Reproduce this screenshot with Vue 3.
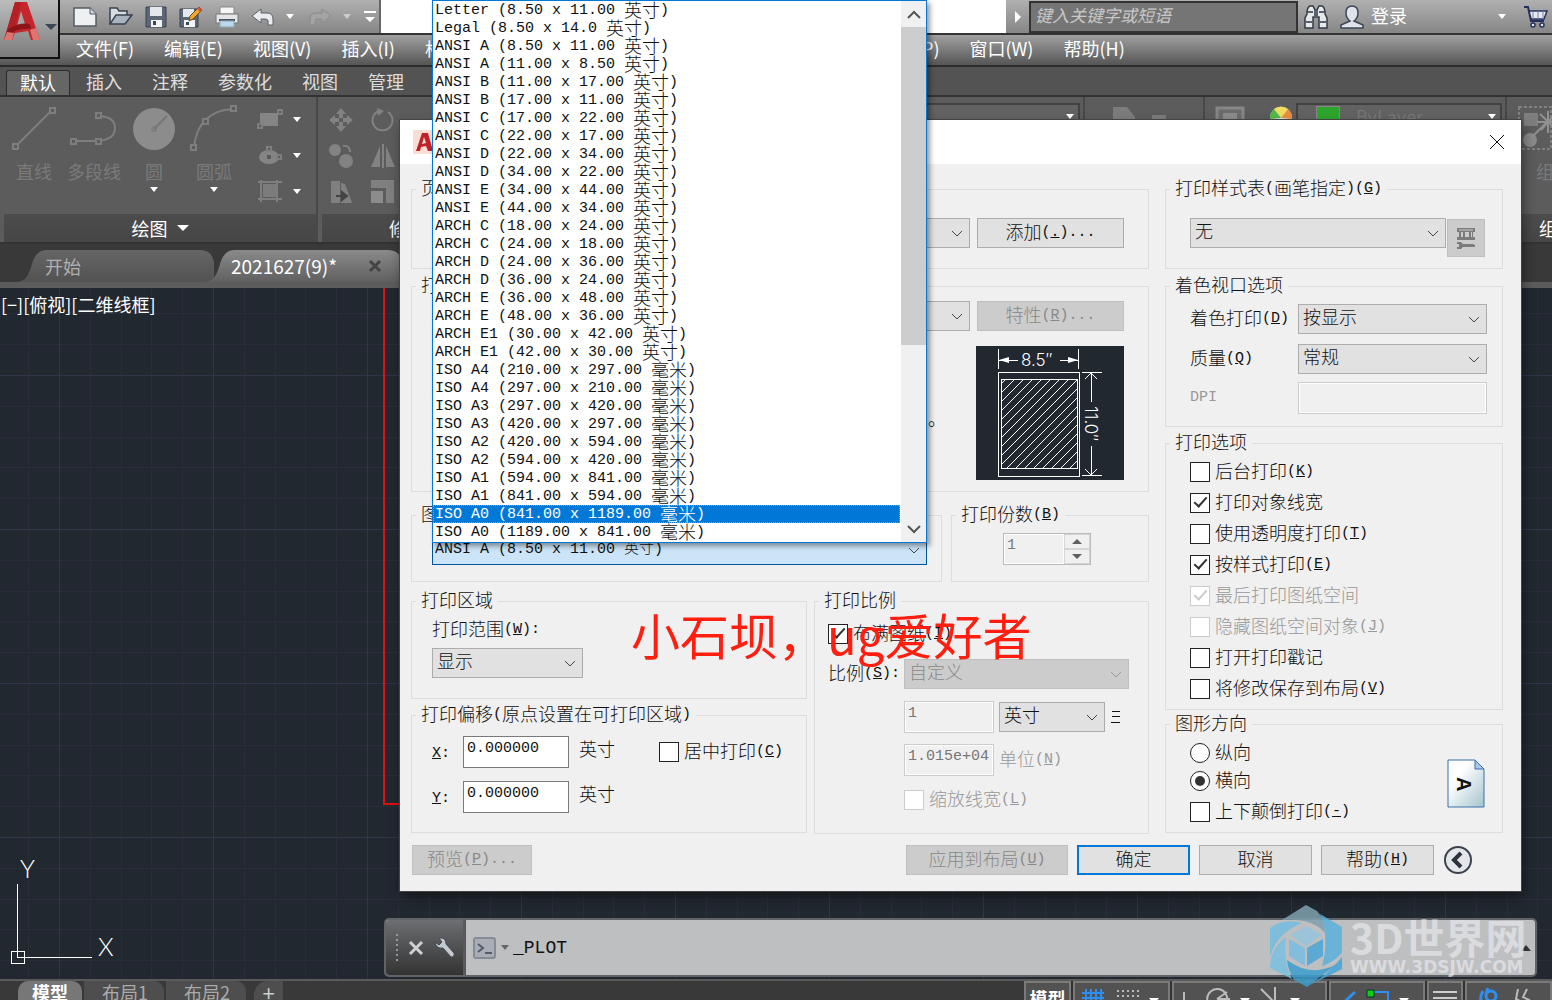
<script setup>
import { h } from 'vue'

// Label text: Latin runs and Han runs get their own size, "&" marks the access key.
const T = (props) => {
  const parts = props.s.match(/&.|[\u2e80-\uffef]+|[^&\u2e80-\uffef]+/g) || []
  return h('span', { class: 't' }, parts.map((p) => {
    if (p[0] === '&') return h('u', { class: 'lat' }, p.slice(1))
    return h('span', { class: /[\u2e80-\uffef]/.test(p) ? 'han' : 'lat' }, p)
  }))
}
T.props = ['s']

const menus = ['文件(F)', '编辑(E)', '视图(V)', '插入(I)', '格式(O)', '工具(T)', '绘图(D)', '标注(N)', '修改(M)', '参数(P)', '窗口(W)', '帮助(H)']
const tabs = ['默认', '插入', '注释', '参数化', '视图', '管理']

const papers = [
  'Letter (8.50 x 11.00 英寸)', 'Legal (8.50 x 14.0 英寸)',
  'ANSI A (8.50 x 11.00 英寸)', 'ANSI A (11.00 x 8.50 英寸)',
  'ANSI B (11.00 x 17.00 英寸)', 'ANSI B (17.00 x 11.00 英寸)',
  'ANSI C (17.00 x 22.00 英寸)', 'ANSI C (22.00 x 17.00 英寸)',
  'ANSI D (22.00 x 34.00 英寸)', 'ANSI D (34.00 x 22.00 英寸)',
  'ANSI E (34.00 x 44.00 英寸)', 'ANSI E (44.00 x 34.00 英寸)',
  'ARCH C (18.00 x 24.00 英寸)', 'ARCH C (24.00 x 18.00 英寸)',
  'ARCH D (24.00 x 36.00 英寸)', 'ARCH D (36.00 x 24.00 英寸)',
  'ARCH E (36.00 x 48.00 英寸)', 'ARCH E (48.00 x 36.00 英寸)',
  'ARCH E1 (30.00 x 42.00 英寸)', 'ARCH E1 (42.00 x 30.00 英寸)',
  'ISO A4 (210.00 x 297.00 毫米)', 'ISO A4 (297.00 x 210.00 毫米)',
  'ISO A3 (297.00 x 420.00 毫米)', 'ISO A3 (420.00 x 297.00 毫米)',
  'ISO A2 (420.00 x 594.00 毫米)', 'ISO A2 (594.00 x 420.00 毫米)',
  'ISO A1 (594.00 x 841.00 毫米)', 'ISO A1 (841.00 x 594.00 毫米)',
  'ISO A0 (841.00 x 1189.00 毫米)', 'ISO A0 (1189.00 x 841.00 毫米)'
]
const active = 28

const options = [
  { s: '后台打印(&K)' },
  { s: '打印对象线宽', on: true },
  { s: '使用透明度打印(&T)' },
  { s: '按样式打印(&E)', on: true },
  { s: '最后打印图纸空间', on: true, off: true },
  { s: '隐藏图纸空间对象(&J)', off: true },
  { s: '打开打印戳记' },
  { s: '将修改保存到布局(&V)' }
]
</script>

<template>
  <div class="app">
    <header class="top">
      <div class="titlebar">
        <div class="quick">
          <svg width="24" height="22" viewBox="0 0 24 22"><path d="M1 2h16l6 6v12H1z" fill="#eef0f2" stroke="#555c66" stroke-width="1.5"/><path d="M17 2v6h6" fill="#cfd3d8" stroke="#555c66"/></svg>
          <svg width="24" height="22" viewBox="0 0 24 22"><path d="M1 18V2h7l2 3h8v4" fill="#d9dde2" stroke="#39424f" stroke-width="1.5"/><path d="M1 18 7 9h16l-7 9z" fill="#a9b3c0" stroke="#39424f" stroke-width="1.5"/></svg>
          <svg width="22" height="22" viewBox="0 0 22 22"><path d="M1 1h20v20H1z" fill="#5b6777" stroke="#3a4452"/><path d="M5 1h12v9H5z" fill="#e4e7eb"/><path d="M6 14h11v7H6z" fill="#f2f3f4"/><path d="M8 15h3v4H8z" fill="#3a4452"/></svg>
          <svg width="24" height="22" viewBox="0 0 24 22"><path d="M1 3h18v18H1z" fill="#5b6777" stroke="#3a4452"/><path d="M4 3h11v8H4z" fill="#e4e7eb"/><path d="M5 14h11v7H5z" fill="#f2f3f4"/><path d="M7 16h3v3H7z" fill="#3a4452"/><path d="m10 15 1-5L20 1l3 3-9 9z" fill="#f0a830" stroke="#6d4a1c"/><path d="m18 3 3 3 2-2-3-3z" fill="#d8543c"/></svg>
          <svg width="24" height="22" viewBox="0 0 24 22"><path d="M5 1h14v7H5z" fill="#f6f6f6" stroke="#888"/><path d="M1 8h22v9H1z" fill="#e3e5e8" stroke="#777"/><path d="M4 13h16v2H4z" fill="#4d5560"/><path d="M5 15h14v6H5z" fill="#bdd7f0" stroke="#8aa"/></svg>
          <svg width="24" height="20" viewBox="0 0 24 20"><path d="M1 9 10 2v4h6q6 0 6 6v6h-5v-4q0-2-3-2h-4v4z" fill="#e9ebee" stroke="#5a6068"/></svg>
          <i class="tri"></i>
          <svg class="redo" width="24" height="20" viewBox="0 0 24 20"><path d="m23 9-9-7v4H8q-6 0-6 6v6h5v-4q0-2 3-2h4v4z" fill="#a4a4a4" stroke="#8a8a8a"/></svg>
          <i class="tri dim"></i>
          <svg width="14" height="14" viewBox="0 0 14 14"><path d="M1 1h12v2H1zM2 7h10l-5 5z" fill="#fff"/></svg>
        </div>
        <div class="caption"></div>
        <div class="info">
          <svg class="arrow" width="8" height="12" viewBox="0 0 8 12"><path d="M1 0v12l6-6z" fill="#fff"/></svg>
          <input class="search" type="text" placeholder="键入关键字或短语" aria-label="键入关键字或短语">
          <svg class="bino" width="24" height="24" viewBox="0 0 24 24"><path d="M3 9Q3 2 6 1h3l2 4h2l2-4h3q3 1 3 8l2 4v10h-8V12h-6v11H1V13z" fill="#e6e8ec" stroke="#333a45" stroke-width="1.5"/><path d="M2 17h7M15 17h7M4 7h5M15 7h5M11 5v7M13 5v7" stroke="#5a6270" stroke-width="2"/></svg>
          <svg class="user" width="24" height="24" viewBox="0 0 24 24"><path d="M12 1q6 0 6 7 0 5-4 8l9 4v3H1v-3l9-4q-4-3-4-8 0-7 6-7z" fill="#dfe4ec" stroke="#3d4656" stroke-width="1.5"/></svg>
          <button class="login">登录</button>
          <i class="tri"></i>
          <svg class="cart" width="26" height="24" viewBox="0 0 26 24"><path d="M1 2h4l3 14h13" fill="none" stroke="#26305c" stroke-width="2"/><path d="M6 6h18l-3 8H8z" fill="#e8eaf2" stroke="#26305c" stroke-width="1.5"/><path d="M10 6v8M15 6v8M20 6v8" stroke="#7880a0"/><circle cx="10" cy="20" r="2" fill="#e8eaf2" stroke="#26305c" stroke-width="1.5"/><circle cx="19" cy="20" r="2" fill="#e8eaf2" stroke="#26305c" stroke-width="1.5"/></svg>
        </div>
      </div>
      <nav class="menubar"><a v-for="m in menus" :key="m" href="#">{{ m }}</a></nav>
      <button class="logo" aria-label="应用程序菜单">
        <svg width="38" height="40" viewBox="0 0 38 40"><path d="M1 39 12 1h12l13 38h-9l-3-9-13 2-3 7z" fill="#c4262b"/><path d="M1 39 12 1h6L9 39z" fill="#b31f24"/><path d="m14 25 8-2-4-13z" fill="#a5a5a5"/><path d="M5 28q12-7 22-5l1 5q-13-2-26 8z" fill="#8d1519"/><path d="m27 29 3 10h7l-4-12zM1 39l3-8 7 1-2 7z" fill="#dd7672"/></svg>
        <svg width="12" height="8" viewBox="0 0 12 8"><path d="M0 1h12L6 7z" fill="#3b4654"/></svg>
      </button>
      <nav class="tabs"><button v-for="(t, i) in tabs" :key="t" :class="{ on: i === 0 }">{{ t }}</button></nav>
      <div class="ribbon">
        <section class="panel draw">
          <div class="tools">
            <button class="big"><svg width="46" height="48" viewBox="0 0 46 48"><path d="M5 41 41 5" class="ln"/><path d="M2 39h5v5H2zM39 3h5v5h-5z" class="bx"/></svg><span>直线</span></button>
            <button class="big"><svg width="48" height="48" viewBox="0 0 48 48"><path d="M3 36h26q16-2 16-13T29 11" class="ln"/><path d="M1 34h5v5H1zM26 34h5v5h-5zM26 8h5v5h-5z" class="bx"/></svg><span>多段线</span></button>
            <button class="big"><svg width="48" height="48" viewBox="0 0 48 48"><circle cx="24" cy="24" r="21" fill="#8c8c8c"/><path d="m24 24 13-13" stroke="#757575" stroke-width="2"/><path d="M22 22h4v4h-4z" fill="none" stroke="#757575"/></svg><span>圆</span><i class="tri"></i></button>
            <button class="big"><svg width="48" height="48" viewBox="0 0 48 48"><path d="M4 42Q8 6 43 4" class="ln"/><path d="M1 40h5v5H1zM13 14h5v5h-5zM41 1h5v5h-5z" class="bx"/></svg><span>圆弧</span><i class="tri"></i></button>
            <div class="small">
              <button><svg width="26" height="24" viewBox="0 0 26 24"><path d="M3 6h18v13H3z" fill="#858585"/><path d="M21 3h4v4h-4zM1 17h4v4H1z" class="bx"/></svg><i class="tri"></i></button>
              <button><svg width="26" height="24" viewBox="0 0 26 24"><ellipse cx="12" cy="14" rx="10" ry="7" fill="#858585"/><path d="M10 12h4v4h-4z" fill="#5a5a5a"/><path d="M10 4h4v4h-4zM20 12h4v4h-4z" class="bx"/></svg><i class="tri"></i></button>
              <button><svg width="26" height="24" viewBox="0 0 26 24"><path d="M6 5h13v13H6z" fill="#7c7c7c"/><path d="M4 1v22M20 1v22M1 3h24M1 20h24" class="ln"/></svg><i class="tri"></i></button>
            </div>
          </div>
          <h3>绘图<i class="tri lg"></i></h3>
        </section>
        <section class="panel modify">
          <div class="tools grid6">
            <svg width="26" height="26" viewBox="0 0 26 26"><path d="m13 1 5 6h-3v4h-4V7H8zM13 25l5-6h-3v-4h-4v4H8zM1 13l6-5v3h4v4H7v3zM25 13l-6-5v3h-4v4h4v3z" fill="#828282"/></svg>
            <svg width="26" height="26" viewBox="0 0 26 26"><path d="M9 4a10 10 0 1 0 9 1" fill="none" stroke="#828282" stroke-width="2"/><path d="m7 1 7 3-6 5z" fill="#828282"/></svg>
            <svg width="26" height="26" viewBox="0 0 26 26"><circle cx="7" cy="7" r="6" fill="#828282"/><circle cx="18" cy="18" r="7" fill="#828282"/><path d="M15 3q7-1 7 6" fill="none" stroke="#828282" stroke-width="2"/></svg>
            <svg width="26" height="26" viewBox="0 0 26 26"><path d="M10 3v21H1zM16 3v21h9z" fill="#828282"/><path d="M13 1v24" stroke="#828282" stroke-width="2"/></svg>
            <svg width="26" height="26" viewBox="0 0 26 26"><path d="M3 2h9v22H3zM13 4l4 1 7 19H13z" fill="#808080"/><path d="M8 17h8M14 13l5 4-5 4z" stroke="#444" stroke-width="2" fill="#444"/></svg>
            <svg width="26" height="26" viewBox="0 0 26 26"><path d="M1 1h23v23h-8V9H1z" fill="#808080"/><path d="M1 12h12v12H1z" fill="#8c8c8c"/></svg>
          </div>
          <h3>修改</h3>
        </section>
        <section class="panel layers"><div class="tools"><div class="combo"><i class="tri"></i></div></div><h3></h3></section>
        <section class="panel insert"><div class="tools"><svg width="62" height="36" viewBox="0 0 62 36"><path d="M4 2h14l8 10v24H4z" fill="#7c7c7c"/><path d="M43 10h14v26H43z" fill="#7c7c7c"/></svg></div><h3></h3></section>
        <section class="panel props">
          <div class="tools">
            <svg width="30" height="32" viewBox="0 0 30 32"><path d="M2 3h26v29H2z" fill="#6c6c6c" stroke="#868686" stroke-width="3"/><path d="M8 8h14v10H8z" fill="#8c8c8c"/></svg>
            <svg width="24" height="24" viewBox="0 0 24 24"><circle cx="12" cy="12" r="11" fill="#e8e8e8"/><path d="M12 12 5 3a11 11 0 0 1 14 0z" fill="#f0dd60"/><path d="M12 12 19 3a11 11 0 0 1 4 10z" fill="#e89040"/><path d="M12 12 1 13A11 11 0 0 1 5 3z" fill="#54b848"/></svg>
            <div class="combo"><b></b><span>ByLayer</span><i class="tri"></i></div>
          </div>
          <h3></h3>
        </section>
        <section class="panel group">
          <div class="tools">
            <button class="big"><svg width="44" height="48" viewBox="0 0 44 48"><path d="M2 2h32v42H2z" fill="none" stroke="#808080" stroke-dasharray="3 2" stroke-width="2"/><path d="M7 8h14v13H7z" fill="#7e7e7e"/><circle cx="13" cy="35" r="7" fill="#8a8a8a"/><path d="m15 32 16-16M31 6v22M20 17h24M23 9l17 16M39 8 24 25" stroke="#909090" stroke-width="2"/></svg><span>组</span></button>
          </div>
          <h3>组</h3>
        </section>
      </div>
      <nav class="files">
        <button class="file">开始</button>
        <button class="file on"><span>2021627(9)*</span><svg width="14" height="14" viewBox="0 0 14 14"><path d="m2 2 10 10M12 2 2 12" stroke="#444" stroke-width="3"/></svg></button>
      </nav>
    </header>

    <main class="canvas">
      <svg class="grid" width="100%" height="100%">
        <defs>
          <pattern id="gridlines" x="59" y="87" width="154" height="154" patternUnits="userSpaceOnUse">
            <path d="M31 0h1v154h-1zM62 0h1v154h-1zM92 0h1v154h-1zM123 0h1v154h-1zM0 31h154v1H0zM0 62h154v1H0zM0 92h154v1H0zM0 123h154v1H0z" fill="#292d39"/>
            <path d="M0 0h1v154H0zM0 0h154v1H0z" fill="#31354a"/>
          </pattern>
        </defs>
        <rect width="100%" height="100%" fill="#212830"/>
        <rect width="100%" height="100%" fill="url(#gridlines)"/>
        <path d="M384 0v516h40" fill="none" stroke="#e01010" stroke-width="2"/>
      </svg>
      <p class="viewlabel">[−][俯视][二维线框]</p>
      <svg class="ucs" width="130" height="130" viewBox="0 0 130 130">
        <path d="M17 35v73h75M11 102h13v12H11z" fill="none" stroke="#fff" shape-rendering="crispEdges"/>
        <text x="20" y="29">Y</text><text x="98" y="107">X</text>
      </svg>
      <div class="command">
        <div class="grip">
          <svg width="4" height="28" viewBox="0 0 4 28"><path d="M2 0v28" stroke="#999" stroke-width="2" stroke-dasharray="2 3"/></svg>
          <svg width="16" height="16" viewBox="0 0 16 16"><path d="m2 2 12 12M14 2 2 14" stroke="#d0d0d0" stroke-width="3"/></svg>
          <svg width="22" height="22" viewBox="0 0 22 22"><path d="M2 5 6 8 9 5 6 1q7-1 7 6l8 9q1 4-3 4l-8-9Q3 12 2 5z" fill="#c4c9d0" stroke="#454a52"/></svg>
        </div>
        <label class="prompt">
          <svg width="24" height="22" viewBox="0 0 24 22"><rect x="1" y="1" width="21" height="20" rx="2" fill="#a9adb5" stroke="#868b96" stroke-width="2"/><path d="m5 7 5 4-5 4M12 16h7" fill="none" stroke="#555b68" stroke-width="2"/></svg>
          <i class="tri grey"></i>
          <input type="text" value="_PLOT" aria-label="命令">
          <svg width="10" height="6" viewBox="0 0 10 6"><path d="M0 6h10L5 0z" fill="#333"/></svg>
        </label>
      </div>
    </main>

    <footer class="status">
      <nav class="layouts">
        <button class="on">模型</button><button>布局1</button><button>布局2</button><button class="plus">+</button>
      </nav>
      <div class="toggles">
        <button class="g1">模型</button>
        <span class="g2"><svg width="24" height="24" viewBox="0 0 24 24"><path d="M5 2v22M10 2v22M15 2v22M20 2v22M1 6h22M1 11h22M1 16h22" stroke="#2e8ff0" stroke-width="2"/></svg><svg width="24" height="24" viewBox="0 0 24 24"><path d="M2 4h22M2 9h22M2 14h22M2 19h22" stroke="#bbb" stroke-width="2" stroke-dasharray="2 3"/></svg><i class="tri"></i></span>
        <span class="g3"><svg width="16" height="24" viewBox="0 0 16 24"><path d="M4 5v18h12" fill="none" stroke="#bbb" stroke-width="2"/></svg><svg width="26" height="24" viewBox="0 0 26 24"><path d="M22 14A10 10 0 1 0 12 22M12 12 22 5M12 12h13" fill="none" stroke="#bbb" stroke-width="2"/></svg><i class="tri"></i><svg width="22" height="24" viewBox="0 0 22 24"><path d="m2 2 14 14M16 0v24" stroke="#bbb" stroke-width="2" fill="none"/></svg><i class="tri"></i></span>
        <span class="g4"><svg width="20" height="24" viewBox="0 0 20 24"><path d="M2 20 18 5M4 14l6 6" stroke="#2e8ff0" stroke-width="3"/></svg><svg width="26" height="24" viewBox="0 0 26 24"><path d="M8 5h15v18" fill="none" stroke="#2e8ff0" stroke-width="2"/><path d="M2 3h7v7H2z" fill="#10d010" stroke="#033"/></svg><i class="tri"></i></span>
        <span class="g5"><svg width="26" height="24" viewBox="0 0 26 24"><path d="M1 5h24M1 11h24" stroke="#ccc" stroke-width="2"/><path d="M1 18h15" stroke="#ccc" stroke-width="4"/></svg></span>
        <span class="g6"><svg width="20" height="24" viewBox="0 0 20 24"><path d="M4 4q-5 8 1 14M9 1 7 7" fill="none" stroke="#2e8ff0" stroke-width="3"/><circle cx="12" cy="9" r="5" fill="none" stroke="#2e8ff0" stroke-width="3"/></svg><svg width="20" height="24" viewBox="0 0 20 24"><path d="M5 2 3 12l4 2-2 8M14 2l-4 8 6 3-4 9" fill="none" stroke="#bbb" stroke-width="2"/></svg></span>
      </div>
    </footer>

    <form class="dialog" role="dialog" aria-label="打印" @submit.prevent>
      <div class="dtitle">
        <svg width="22" height="24" viewBox="0 0 22 24"><path d="M0 0h22v24H0z" fill="#f8ded4"/><path d="M3 21 9 3h6l5 18h-5l-2-5-5 1-1 4z" fill="#bf2228"/><path d="m9 14 4-1-2-6z" fill="#f8ded4"/></svg>
        <button class="close" type="button" aria-label="关闭"><svg width="16" height="16" viewBox="0 0 16 16"><path d="m1 1 14 14M15 1 1 15" stroke="#111" stroke-width="1"/></svg></button>
      </div>
      <div class="dbody">
        <div class="left">
          <fieldset class="short">
            <legend><T s="页面设置"/></legend>
            <div class="row devrow">
              <span class="sel grow"><select aria-label="页面设置名称"></select><svg class="chev" viewBox="0 0 12 7"><path d="m1 1 5 5 5-5"/></svg></span>
              <button class="btn wide" type="button"><T s="添加(&.)..."/></button>
            </div>
          </fieldset>
          <fieldset class="printer">
            <legend><T s="打印机/绘图仪"/></legend>
            <div class="row devrow">
              <span class="sel grow"><select aria-label="打印机名称"></select><svg class="chev" viewBox="0 0 12 7"><path d="m1 1 5 5 5-5"/></svg></span>
              <button class="btn wide" type="button" disabled><T s="特性(&R)..."/></button>
            </div>
            <div class="row preview">
              <T class="desc" s="。"/>
              <svg width="148" height="134" viewBox="0 0 148 134">
                <defs><pattern id="hatch" width="9" height="9" patternUnits="userSpaceOnUse"><path d="M-1 10 10-1M-1 1l2-2M8 10l2-2" stroke="#fff"/></pattern></defs>
                <rect width="148" height="134" fill="#212830"/>
                <g fill="none" stroke="#fff" shape-rendering="crispEdges"><path d="M22 26h81v104H22zM25 33h76v89H25z"/><path d="M22 3v20M102 3v20M23 14h19M84 14h18M106 26h20M106 129h20M115 27v29M115 100v29M109 33l6-6 6 6M109 123l6 6 6-6"/></g>
                <rect x="26" y="34" width="75" height="88" fill="url(#hatch)"/>
                <path d="m23 14 10-3v6zM102 14l-10-3v6z" fill="#fff"/>
                <text x="45" y="20">8.5′′</text><text transform="translate(109 60) rotate(90)">11.0′′</text>
              </svg>
            </div>
          </fieldset>
          <div class="sizes">
            <fieldset>
              <legend><T s="图纸尺寸(&Z)"/></legend>
              <div class="paper"><span class="sel open"><select aria-label="图纸尺寸"><option>ANSI A (8.50 x 11.00 英寸)</option></select><svg class="chev" viewBox="0 0 12 7"><path d="m1 1 5 5 5-5"/></svg></span></div>
            </fieldset>
            <fieldset>
              <legend><T s="打印份数(&B)"/></legend>
              <div class="copies"><input type="text" value="1" disabled aria-label="打印份数"><span><button type="button" disabled aria-label="增加"><svg width="10" height="5" viewBox="0 0 10 5"><path d="M0 5h10L5 0z" fill="#606060"/></svg></button><button type="button" disabled aria-label="减少"><svg width="10" height="5" viewBox="0 0 10 5"><path d="M0 0h10L5 5z" fill="#606060"/></svg></button></span></div>
            </fieldset>
          </div>
          <div class="lower">
            <div class="stack">
              <fieldset class="area">
                <legend><T s="打印区域"/></legend>
                <div class="col">
                  <label for="range"><T s="打印范围(&W):"/></label>
                  <span class="sel"><select id="range"><option>显示</option></select><svg class="chev" viewBox="0 0 12 7"><path d="m1 1 5 5 5-5"/></svg></span>
                </div>
              </fieldset>
              <fieldset class="offset">
                <legend><T s="打印偏移(原点设置在可打印区域)"/></legend>
                <div class="row off"><label for="ox"><T s="&X:"/></label><input id="ox" type="text" value="0.000000"><span class="unit">英寸</span><label class="check"><input type="checkbox"><T s="居中打印(&C)"/></label></div>
                <div class="row off"><label for="oy"><T s="&Y:"/></label><input id="oy" type="text" value="0.000000"><span class="unit">英寸</span></div>
              </fieldset>
            </div>
            <fieldset class="scale">
              <legend><T s="打印比例"/></legend>
              <label class="check fit"><input type="checkbox" checked><T s="布满图纸(&I)"/></label>
              <div class="row ratio"><label for="ratio"><T s="比例(&S):"/></label><span class="sel dis"><select id="ratio" disabled><option>自定义</option></select><svg class="chev" viewBox="0 0 12 7"><path d="m1 1 5 5 5-5"/></svg></span></div>
              <div class="row ind"><input type="text" value="1" disabled aria-label="图纸长度"><span class="sel unitsel"><select aria-label="图纸单位"><option>英寸</option></select><svg class="chev" viewBox="0 0 12 7"><path d="m1 1 5 5 5-5"/></svg></span><svg width="10" height="14" viewBox="0 0 10 14" shape-rendering="crispEdges"><path d="M1 1h8v1H1zM1 6h8v1H1zM0 12h9v1H0z" fill="#111"/></svg></div>
              <div class="row ind"><input id="unit" type="text" value="1.015e+04" disabled><label for="unit" class="grey"><T s="单位(&N)"/></label></div>
              <label class="check ind grey"><input type="checkbox" disabled><T s="缩放线宽(&L)"/></label>
            </fieldset>
          </div>
        </div>

        <div class="right">
          <fieldset class="short">
            <legend><T s="打印样式表(画笔指定)(&G)"/></legend>
            <div class="row style">
              <span class="sel grow"><select aria-label="打印样式表"><option>无</option></select><svg class="chev" viewBox="0 0 12 7"><path d="m1 1 5 5 5-5"/></svg></span>
              <button class="btn edit" type="button" disabled aria-label="编辑"><svg width="20" height="22" viewBox="0 0 20 22"><path d="M1 1h18v4h-2v5h2v3H1v-3h2V5H1zM5 5v5h2V5zM9 5v5h4V5zM15 5v5h1V5z" fill="#7c7c7c" fill-rule="evenodd"/><path d="M3 3h14" stroke="#ccc"/><path d="M1 15h4l2 2h10l2 1v2H7l-2 2H1v-2h2v-3H1z" fill="#7c7c7c"/></svg></button>
            </div>
          </fieldset>
          <fieldset class="shade">
            <legend><T s="着色视口选项"/></legend>
            <div class="row"><label for="shade"><T s="着色打印(&D)"/></label><span class="sel"><select id="shade"><option>按显示</option></select><svg class="chev" viewBox="0 0 12 7"><path d="m1 1 5 5 5-5"/></svg></span></div>
            <div class="row"><label for="quality"><T s="质量(&Q)"/></label><span class="sel"><select id="quality"><option>常规</option></select><svg class="chev" viewBox="0 0 12 7"><path d="m1 1 5 5 5-5"/></svg></span></div>
            <div class="row"><label for="dpi" class="grey"><T s="DPI"/></label><input id="dpi" type="text" disabled></div>
          </fieldset>
          <fieldset class="opts">
            <legend><T s="打印选项"/></legend>
            <label v-for="o in options" :key="o.s" class="check" :class="{ grey: o.off }"><input type="checkbox" :checked="o.on" :disabled="o.off"><T :s="o.s"/></label>
          </fieldset>
          <fieldset class="orient">
            <legend><T s="图形方向"/></legend>
            <div>
              <label class="check"><input type="radio" name="orient"><T s="纵向"/></label>
              <label class="check"><input type="radio" name="orient" checked><T s="横向"/></label>
              <label class="check last"><input type="checkbox"><T s="上下颠倒打印(&-)"/></label>
            </div>
            <svg width="38" height="49" viewBox="0 0 38 49">
              <defs><linearGradient id="sheet" x2="1" y2="1"><stop offset="0.3" stop-color="#fff"/><stop offset="1" stop-color="#a4c4cc"/></linearGradient></defs>
              <path d="M1 1h27l9 9v38H1z" fill="url(#sheet)" stroke="#3a70a8"/><path d="M28 1v9h9z" fill="#a9c8e8" stroke="#3a70a8"/>
              <text transform="translate(10 18) rotate(90)">A</text>
            </svg>
          </fieldset>
        </div>
      </div>
      <div class="actions">
        <button class="btn pv" type="button" disabled><T s="预览(&P)..."/></button>
        <button class="btn ap" type="button" disabled><T s="应用到布局(&U)"/></button>
        <button class="btn ok" type="submit"><T s="确定"/></button>
        <button class="btn" type="button"><T s="取消"/></button>
        <button class="btn" type="button"><T s="帮助(&H)"/></button>
        <button class="less" type="button" aria-label="收起选项"><svg width="30" height="30" viewBox="0 0 30 30"><circle cx="15" cy="15" r="13" fill="#e4e6ea" stroke="#3c434d" stroke-width="2"/><path d="m18 8-7 7 7 7" fill="none" stroke="#2c333d" stroke-width="4"/></svg></button>
      </div>

      <div class="popup">
        <ul role="listbox" aria-label="图纸尺寸">
          <li v-for="(p, i) in papers" :key="p" role="option" :aria-selected="i === active" :class="{ on: i === active }"><T :s="p"/></li>
        </ul>
        <div class="scroll">
          <svg viewBox="0 0 14 9"><path d="m1 8 6-6 6 6"/></svg>
          <i></i>
          <svg viewBox="0 0 14 9"><path d="m1 1 6 6 6-6"/></svg>
        </div>
      </div>
      <p class="note">小石坝，ug爱好者</p>
    </form>

    <div class="mark">
      <svg width="74" height="84" viewBox="0 0 74 84">
        <path d="M13 16 37 1l11 6q8 8 8 22-12-15-43-13z" fill="#7fa0ae"/>
        <path d="m51 10 22 13v26q-10 10-20 13 8-28-2-52z" fill="#5bb0dd"/>
        <path d="M1 24q14-10 32-5Q6 30 1 54z" fill="#73bde0"/>
        <path d="M1 61q2-18 16-28-3 25 6 42L1 64z" fill="#7abfe0"/>
        <path d="m73 53v12L37 83q20-10 36-30z" fill="#45a5d8"/>
        <path d="M18 56q24 18 50 4L38 83 25 76q-6-10-7-20z" fill="#3c9dcd"/>
        <path d="m37 22 16 9-16 11-16-11z" fill="#97c5dd"/><path d="m20 35 16 9v18l-16-10z" fill="#78bde2"/><path d="m54 35-16 9v18l16-10z" fill="#4ba6d8"/>
      </svg>
      <div><strong>3D世界网</strong><span>WWW.3DSJW.COM</span></div>
    </div>
  </div>
</template>

<style>
html, body, #app { height: 100%; }
body { overflow: hidden; background: #212830; }
*, *::before, *::after { box-sizing: border-box; }
.t { display: inline-flex; align-items: center; height: 20px; padding-bottom: 2px; line-height: 18px; white-space: pre; vertical-align: top; }
.lat { padding-top: 2px; font-family: "Liberation Mono", monospace; font-size: 15px; }
.han { padding-bottom: 2px; font-size: 18px; }
</style>

<style scoped>
.app { position: relative; height: 100%; display: flex; flex-direction: column; overflow: hidden; font-family: "Noto Sans CJK SC", sans-serif; font-size: 18px; line-height: 20px; color: #fff; }
button, input, select { font: inherit; color: inherit; margin: 0; border-radius: 0; }
button { background: none; border: 0; padding: 0; }
svg { display: block; flex: none; }
.tri { flex: none; border: 4px solid transparent; border-top: 5px solid #fff; border-bottom: 0; }
.tri.dim { border-top-color: #ccc; }
.tri.grey { border-top-color: #666; }
.tri.lg { border-width: 6px 6px 0; }

.top { position: relative; }
.titlebar { height: 35px; display: flex; background: #fff; border-bottom: 2px solid #333; }
.quick { width: 381px; padding-left: 73px; display: flex; align-items: center; gap: 12px; background: linear-gradient(#b0b0b0, #868686); border-right: 2px solid #666; }
.quick .tri { margin-left: -1px; }
.quick .redo { margin-left: 2px; }
.caption { flex: 1; }
.info { width: 546px; display: flex; align-items: center; background: linear-gradient(#b0b0b0, #868686); }
.arrow { margin: 0 7px 0 8px; }
.search { width: 269px; height: 33px; background: #757575; border: 2px solid #333; padding: 0 4px 4px; font-size: 17px; font-style: italic; color: #ddd; }
.search::placeholder { color: #c8c8c8; opacity: 1; }
.bino { margin-left: 6px; }
.user { margin-left: 12px; }
.login { margin: 0 auto 0 7px; padding-bottom: 3px; }
.cart { margin: 0 3px 0 17px; }
.menubar { height: 32px; padding: 0 0 4px 76px; display: flex; align-items: center; gap: 30px; background: linear-gradient(#a0a0a0, #555); border-bottom: 2px solid #2c2c2c; }
.menubar a { color: #fff; text-decoration: none; white-space: nowrap; }
.logo { position: absolute; left: 0; top: 0; width: 60px; height: 59px; display: flex; align-items: flex-start; gap: 4px; padding: 1px 0 0 3px; background: linear-gradient(#bdbdbd, #7c7c7c); border: solid #111; border-width: 0 2px 2px 0; }
.logo svg + svg { margin-top: 22px; }
.tabs { height: 30px; padding: 3px 0 0 6px; display: flex; background: #535353; border-bottom: 2px solid #333; }
.tabs button { padding: 0 15px 3px; color: #ddd; }
.tabs .on { color: #fff; background: #666; border: 1px solid #2c2c2c; border-bottom: 0; border-radius: 3px 3px 0 0; padding: 0 13px 3px; margin-right: 1px; }

.ribbon { height: 147px; display: flex; background: #5c5c5c; border-bottom: 2px solid #333; }
.panel { display: flex; flex-direction: column; border-right: 2px solid #484848; }
.panel h3 { height: 28px; margin: 0 0 0 4px; display: flex; align-items: center; justify-content: center; gap: 9px; font-size: 18px; font-weight: 400; background: linear-gradient(#4c4c4c, #464646); }
.tools { flex: 1; display: flex; padding: 8px 0 0 4px; }
.draw { width: 318px; }
.modify { flex: 1; }
.layers { width: 167px; }
.insert { width: 120px; }
.props { width: 302px; }
.group { width: 45px; border: 0; }
.big { width: 60px; display: flex; flex-direction: column; align-items: center; align-self: flex-start; color: #7a7a7a; white-space: nowrap; }
.big span { margin: 8px 0 6px; }
.ln { fill: none; stroke: #7e7e7e; stroke-width: 2; }
.bx { fill: #5c5c5c; stroke: #7e7e7e; stroke-width: 2; }
.small { margin: 2px 0 0 13px; display: flex; flex-direction: column; gap: 12px; }
.small button { display: flex; align-items: center; gap: 10px; }
.grid6 { display: grid; grid-template-columns: 26px 26px; grid-auto-rows: 26px; gap: 10px 16px; padding: 10px 0 0 10px; }
.modify h3 { justify-content: flex-start; padding-left: 67px; }
.combo { flex: 1; height: 26px; margin-right: 3px; margin-top: -2px; padding: 0 4px 0 18px; display: flex; align-items: center; justify-content: flex-end; border: 2px solid #424242; background: #626262; color: #777; }
.combo b { width: 24px; height: 20px; background: #2ea52c; border: 1px solid #888; margin-right: 16px; }
.combo span { flex: 1; }
.insert .tools { padding-left: 24px; }
.props .tools { padding-left: 10px; align-items: flex-start; }
.props svg + svg { margin: 1px 3px 0 24px; }
.group .big { flex: none; width: 44px; margin-left: 6px; }
.group .big span { padding-left: 12px; }
.group h3 { justify-content: flex-start; padding-left: 28px; white-space: nowrap; }

.files { height: 44px; padding: 6px 0 0 16px; display: flex; background: #393939; border-bottom: 6px solid #5c5c5c; }
.file { width: 198px; height: 32px; padding: 0 20px 1px 29px; text-align: left; color: #b0b0b0; background: linear-gradient(#666, #525252); clip-path: path("M0 32C12 32 14 20 17 11Q21 0 30 0H184Q196 0 198 12V32Z"); }
.file.on { margin-left: -10px; padding-left: 27px; display: flex; align-items: center; justify-content: space-between; font-size: 19px; color: #fff; background: linear-gradient(#8a8a8a, #606060); }

.canvas { flex: 1; position: relative; overflow: hidden; display: flex; flex-direction: column; }
.grid { position: absolute; inset: 0; }
.viewlabel { position: relative; margin: 6px 0 0 1px; }
.ucs { position: absolute; left: 0; bottom: 0; }
.ucs text { font: 300 25px Lato, sans-serif; fill: #fff; }
.command { position: relative; margin: auto 15px 2px 384px; height: 59px; display: flex; border: 2px solid #606468; border-radius: 5px; background: #bebfc1; overflow: hidden; }
.grip { width: 80px; display: flex; align-items: center; gap: 9px; padding-left: 9px; background: linear-gradient(#6c6e71, #333); border-right: 3px solid #58595c; }
.prompt { flex: 1; display: flex; align-items: center; padding: 0 4px 0 7px; }
.prompt .tri { margin: 0 4px; }
.prompt input { flex: 1; background: none; border: 0; padding: 0; color: #111; font-family: "Liberation Mono", monospace; }

.status { height: 21px; display: flex; justify-content: space-between; background: #393939; border-top: 2px solid #5a5a5a; overflow: hidden; }
.layouts { display: flex; padding-left: 18px; align-items: flex-start; }
.layouts button { height: 22px; padding: 0 16px 0 18px; margin-right: 2px; line-height: 22px; color: #aaa; background: #4e4e4e; border-radius: 0 10px 0 0; }
.layouts .on { font-weight: 700; color: #fff; background: #777; border-radius: 10px 10px 0 0; padding: 0 14px; }
.layouts .plus { width: 29px; margin-left: 6px; padding: 0; font-size: 22px; border-radius: 14px 0 0 0; color: #ccc; }
.toggles { width: 528px; display: flex; gap: 2px; background: #333; }
.toggles > * { height: 30px; display: flex; align-items: flex-start; gap: 10px; padding: 4px 6px 0; background: #525252; border: 2px solid #7a7a7a; border-bottom: 0; }
.toggles .tri { margin-top: 11px; border-width: 6px 5px 0; }
.toggles .g1 { width: 47px; padding: 5px 0 0; justify-content: center; font-weight: 700; white-space: nowrap; }
.toggles .g2 { width: 97px; }
.toggles .g3 { width: 155px; gap: 9px; }
.toggles .g4 { width: 96px; gap: 8px; }
.toggles .g5 { width: 36px; padding: 4px 3px 0; }
.toggles .g6 { flex: 1; padding-left: 12px; gap: 14px; }

.dialog { position: absolute; left: 400px; right: 31px; top: 120px; background: #f0f0f0; color: #111; font-weight: 300; box-shadow: 0 0 0 1px #444, 2px 6px 12px rgba(0, 0, 0, .45); }
.dtitle { height: 44px; padding: 0 16px 1px 13px; display: flex; align-items: center; justify-content: space-between; background: #fff; }
.dbody { display: grid; grid-template-columns: minmax(0, 738fr) minmax(0, 338fr); gap: 16px; padding: 15px 18px 0 11px; }
fieldset { --pad: 0px; margin: 0; padding: 0 0 0 var(--pad); min-width: 0; border: 1px solid #dcdcdc; }
legend { height: 20px; margin-left: calc(4px - var(--pad)); padding: 0 5px; }
.left, .right, .stack, .col { display: flex; flex-direction: column; min-width: 0; }
.row { display: flex; align-items: flex-start; }
.short { height: 90px; margin-bottom: 7px; }
.devrow { gap: 7px; padding: 19px 24px 0 80px; }
.grow { flex: 1; }
.printer { height: 216px; margin-bottom: 13px; }
.printer .devrow { padding-top: 5px; }
.preview { justify-content: flex-end; align-items: center; gap: 30px; padding: 15px 24px 0 0; }
.preview text { fill: #fff; font: 300 17px Inter, sans-serif; }
.sizes { display: grid; grid-template-columns: minmax(0, 531fr) minmax(0, 198fr); gap: 9px; margin-bottom: 9px; }
.sizes fieldset { height: 77px; }
.paper { padding: 10px 14px 0 20px; }
.copies { width: 88px; height: 32px; margin: 8px 0 0 51px; display: flex; border: 1px solid #bbb; }
.copies span { flex: 1; display: flex; flex-direction: column; }
.copies button { flex: 1; display: grid; place-items: center; border: 1px solid #d4d4d4; }
.lower { display: grid; grid-template-columns: minmax(0, 396fr) minmax(0, 335fr); gap: 7px; }
.stack { gap: 6px; }
.area { height: 108px; }
.col { padding: 9px 0 0 20px; gap: 8px; }
.col .sel { width: 151px; }
.offset { --pad: 20px; height: 128px; }
.off { align-items: center; height: 32px; margin: 11px 0 13px; }
.off > label:first-child { width: 31px; padding-top: 4px; }
.off > input { width: 106px; }
.off .unit { margin: 0 44px 8px 10px; }
.scale { --pad: 13px; height: 243px; }
.fit { margin-top: 12px; height: 22px; }
.ratio { align-items: center; margin: 14px 0 12px; }
.ratio label { width: 76px; }
.ratio .sel { width: 225px; }
.ind { margin-left: 76px; }
.row.ind { gap: 5px; margin-bottom: 11px; align-items: center; }
.ind > input[type="text"] { width: 90px; }
.unitsel { width: 106px; }
.ind > svg { margin-left: 1px; }
.check.ind { margin-top: 14px; }

.sel { display: grid; }
.sel > * { grid-area: 1 / 1; }
select { appearance: none; width: 100%; height: 30px; padding: 0 24px 6px 4px; background: #e1e1e1; border: 1px solid #adadad; font-weight: 300; line-height: 22px; opacity: 1; }
select:disabled, .btn:disabled { background: #ccc; border-color: #bfbfbf; color: #888; }
.open select { background: #cce4f7; border-color: #005499; font-family: "Liberation Mono", "Noto Sans CJK SC", monospace; font-size: 15px; padding: 0 24px 1px 2px; }
.chev { width: 12px; height: 7px; justify-self: end; align-self: center; margin-right: 7px; fill: none; stroke: #444; pointer-events: none; }
.dis .chev { stroke: #999; }
input[type="text"] { height: 32px; }
.dialog input[type="text"] { padding: 0 3px 7px; background: #fff; border: 1px solid #7a7a7a; font-family: "Liberation Mono", monospace; font-size: 15px; }
.dialog input[type="text"]:disabled { background: #f0f0f0; color: #777; border-color: #ccc; box-shadow: inset 0 0 0 1px #fff; }
.dialog .copies input[type="text"] { width: 60px; height: 30px; border: 0; }
.btn { width: 113px; height: 30px; background: #e1e1e1; border: 1px solid #adadad; font-weight: 300; white-space: nowrap; }
.wide { width: 147px; }
.check { display: flex; align-items: center; gap: 5px; white-space: nowrap; }
.check input { appearance: none; flex: none; width: 20px; height: 20px; background: #fff; border: 1px solid #222; display: grid; place-items: center; }
.check input:disabled { border-color: #ccc; }
.check input[type="checkbox"]:checked::after { content: ""; width: 7px; height: 13px; margin-bottom: 5px; border: solid #333; border-width: 0 2px 2px 0; transform: rotate(42deg); }
.check input[type="checkbox"]:disabled:checked::after { border-color: #ccc; }
.check input[type="radio"] { border-radius: 50%; }
.check input[type="radio"]:checked::after { content: ""; width: 10px; height: 10px; border-radius: 50%; background: #333; }
.grey { color: #999; }
.desc { height: 34px; padding-top: 14px; }

.style { padding: 19px 17px 0 24px; }
.edit { width: 38px; height: 38px; margin: 1px 0 0 1px; display: grid; place-items: center; }
.shade { --pad: 24px; height: 151px; margin-bottom: 6px; padding-top: 8px; padding-right: 15px; }
.shade .row { align-items: center; margin-bottom: 10px; }
.shade label { width: 108px; }
.shade .row > :last-child { flex: 1; min-width: 0; }
.shade .row:last-child { margin-top: -2px; }
.opts { --pad: 24px; height: 277px; margin-bottom: 4px; padding-top: 3px; }
.opts .check { height: 31px; }
.orient { --pad: 24px; height: 119px; display: flex; justify-content: space-between; padding-top: 5px; padding-right: 17px; }
.orient .check { height: 28px; }
.orient .last { height: 34px; }
.orient > svg { margin-top: 20px; }
.orient text { font: 700 20px "Liberation Sans", sans-serif; fill: #111; }
.actions { display: flex; align-items: center; gap: 9px; padding: 11px 48px 16px 12px; }
.pv { width: 120px; }
.ap { width: 162px; margin-left: auto; }
.ok { border: 2px solid #0078d7; }

.popup { position: absolute; left: 32px; top: -120px; width: 495px; display: flex; background: #fff; border: 1px solid #0078d7; box-shadow: 3px 3px 5px rgba(0, 0, 0, .4); }
.popup ul { flex: 1; list-style: none; margin: 0; padding: 0 1px 1px 0; }
.popup li { height: 18px; padding-left: 2px; }
.popup li > .t { height: 18px; padding: 0; }
.popup .on { background: #0078d7; color: #fff; outline: 1px dotted #ff8728; outline-offset: -1px; }
.scroll { width: 25px; display: flex; flex-direction: column; align-items: center; background: #f0f0f0; }
.scroll svg { width: 14px; height: 9px; margin: 9px 0 8px; fill: none; stroke: #555; stroke-width: 2; }
.scroll i { width: 25px; height: 318px; margin-bottom: auto; background: #cdcdcd; }
.note { position: absolute; left: 231px; top: 479px; margin: 0; font-size: 49px; line-height: 70px; font-weight: 400; color: #ff1e10; white-space: nowrap; }

.mark { position: absolute; right: 23px; bottom: 12px; display: flex; align-items: center; gap: 7px; opacity: .85; }
.mark div { display: flex; flex-direction: column; width: 179px; color: rgba(230, 232, 235, .85); white-space: nowrap; }
.mark strong { font-size: 41px; line-height: 42px; }
.mark span { font: 700 17px/20px "DejaVu Sans", sans-serif; }
</style>
